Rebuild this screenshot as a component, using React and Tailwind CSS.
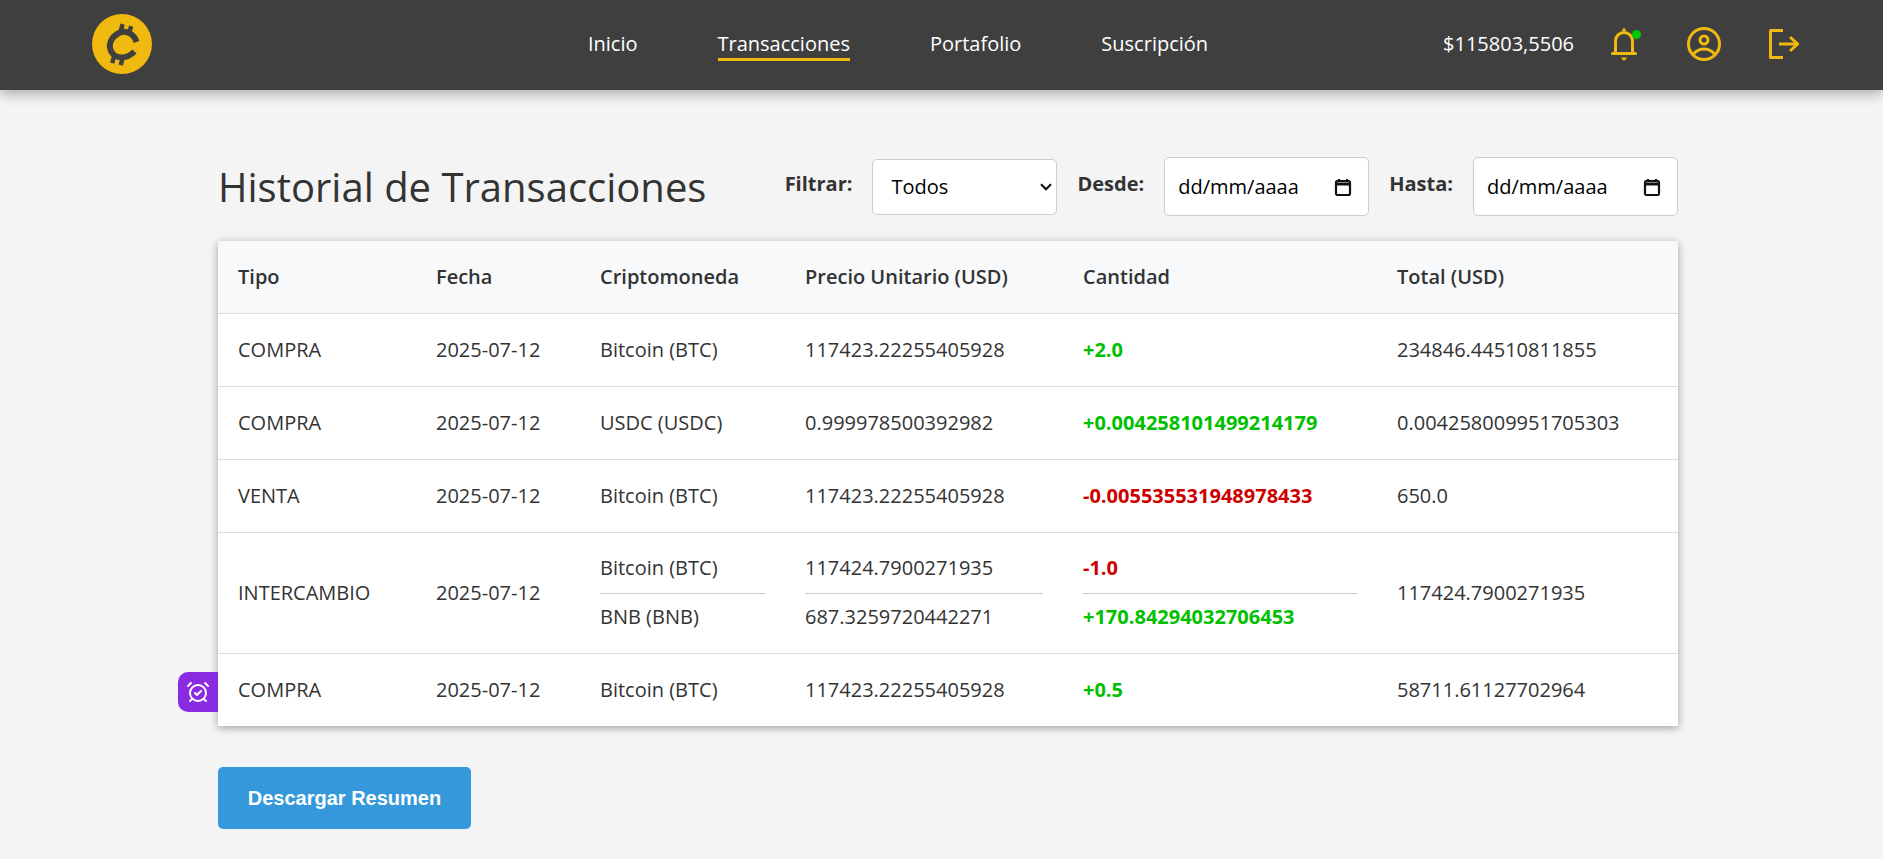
import { AlarmClockCheck } from 'lucide-react';

const rows = [
  { tipo: 'COMPRA', fecha: '2025-07-12', cripto: 'Bitcoin (BTC)', precio: '117423.22255405928', cantidad: '+2.0', total: '234846.44510811855' },
  { tipo: 'COMPRA', fecha: '2025-07-12', cripto: 'USDC (USDC)', precio: '0.999978500392982', cantidad: '+0.004258101499214179', total: '0.004258009951705303' },
  { tipo: 'VENTA', fecha: '2025-07-12', cripto: 'Bitcoin (BTC)', precio: '117423.22255405928', cantidad: '-0.005535531948978433', total: '650.0' },
  {
    tipo: 'INTERCAMBIO',
    fecha: '2025-07-12',
    cripto: ['Bitcoin (BTC)', 'BNB (BNB)'],
    precio: ['117424.7900271935', '687.3259720442271'],
    cantidad: ['-1.0', '+170.84294032706453'],
    total: '117424.7900271935',
  },
  { tipo: 'COMPRA', fecha: '2025-07-12', cripto: 'Bitcoin (BTC)', precio: '117423.22255405928', cantidad: '+0.5', total: '58711.61127702964' },
];

function Logo() {
  return (
    <svg width="60" height="60" viewBox="0 0 60 60">
      <circle cx="30" cy="30" r="30" fill="#f0b90f" />
      <g fill="#3f3f3f">
        <path d="M28.5 9.5l4.3 1.2-2 7-4.3-1.2z" />
        <path d="M37 11.5l4.3 1.2-2 7-4.3-1.2z" />
        <path d="M20 41.5l4.3 1.2-2 7-4.3-1.2z" />
        <path d="M28.5 43.5l4.3 1.2-2 7-4.3-1.2z" />
      </g>
      <path d="M44.5 28 C42 20 34 15.5 27 19 C19 23 15.5 31 19.5 38 C23.500 44.500 34 46 42.500 37.500" fill="none" stroke="#3f3f3f" strokeWidth="6" />
    </svg>
  );
}

function BellIcon() {
  return (
    <svg width="26" height="34" viewBox="0 0 26 34" fill="none" stroke="#f0b90f" strokeWidth="3" strokeLinejoin="round">
      <path d="M4.500 26V14c0-5 3.800-8.500 8.500-8.500s8.500 3.500 8.500 8.500v12" />
      <path d="M1.500 26.500h23" strokeLinecap="round" />
      <path d="M10.500 31h5L13 33.500z" fill="#f0b90f" strokeWidth="1" />
      <circle cx="13" cy="3" r="1.300" fill="#f0b90f" strokeWidth="1" />
    </svg>
  );
}

function UserIcon() {
  return (
    <svg width="34" height="34" viewBox="0 0 34 34" fill="none" stroke="#f0b90f" strokeWidth="3">
      <circle cx="17" cy="17" r="15.500" />
      <circle cx="17" cy="13" r="4" />
      <path d="M6.500 27c3-3.500 6.500-5 10.500-5s7.500 1.500 10.500 5" />
    </svg>
  );
}

function LogoutIcon() {
  return (
    <svg width="30" height="30" viewBox="0 0 30 30" fill="none" stroke="#f0b90f" strokeWidth="3">
      <path d="M14 1.500H1.500v27H14" strokeLinejoin="round" />
      <path d="M10 15h18" />
      <path d="M21 8l7.500 7-7.500 7" />
    </svg>
  );
}

function CalendarIcon() {
  return (
    <svg width="18" height="18" viewBox="0 0 18 18" fill="none" stroke="#111111" strokeWidth="2.200">
      <rect x="2" y="3" width="14" height="14" rx="1.500" />
      <path d="M2 6h14" strokeWidth="3" />
      <path d="M5 1v2M13 1v2" />
    </svg>
  );
}

function DateField({ className }) {
  return (
    <div className={`flex h-[59px] items-center justify-between rounded-[5px] border border-[#cccccc] bg-white pl-[13px] pr-[16px] text-[20px] text-black ${className}`}>
      <span>dd/mm/aaaa</span>
      <CalendarIcon />
    </div>
  );
}

function Stacked({ items, className }) {
  return (
    <div>
      <div className={`pb-[10px] ${className ? className(items[0]) : ''}`}>{items[0]}</div>
      <div className={`border-t border-[#cccccc] pt-[8px] ${className ? className(items[1]) : ''}`}>{items[1]}</div>
    </div>
  );
}

const qtyColor = (v) => (v.startsWith('-') ? 'font-bold text-[#cc0000]' : 'font-bold text-[#00c000]');

export default function App() {
  return (
    <div className="min-h-[859px] bg-[#f4f4f4] font-['Open_Sans',sans-serif] text-[#333333]">
      <header className="flex h-[90px] items-center justify-between bg-[#3f3f3f] pb-[2px] pl-[92px] pr-[84px] shadow-[0_4px_12px_rgba(0,0,0,0.3)]">
        <Logo />
        <nav className="ml-[201px] mt-[2px] flex items-baseline gap-[80px] text-[20px] text-white">
          <a>Inicio</a>
          <a className="border-b-[3px] border-[#f0b90f] leading-[28px]">Transacciones</a>
          <a>Portafolio</a>
          <a>Suscripción</a>
        </nav>
        <div className="flex items-center">
          <span className="text-[20px] text-white">$115803,5506</span>
          <div className="relative ml-[37px] flex">
            <BellIcon />
            <span className="absolute right-[-4px] top-[3px] h-[9px] w-[9px] rounded-full bg-[#00c800]" />
          </div>
          <div className="ml-[50px]"><UserIcon /></div>
          <div className="ml-[48px]"><LogoutIcon /></div>
        </div>
      </header>

      <main className="ml-[218px] w-[1460px] pt-[67px]">
        <div className="flex items-center justify-between">
          <h1 className="text-[40px] font-normal leading-[54px]">Historial de Transacciones</h1>
          <div className="flex items-center">
            <label className="mb-[5px] text-[20px] font-bold">Filtrar:</label>
            <div className="relative ml-[20px]">
              <select className="block h-[56px] w-[185px] appearance-none rounded-[5px] border border-[#cccccc] bg-white pl-[18px] text-[20px] text-black">
                <option>Todos</option>
              </select>
              <svg className="pointer-events-none absolute right-[5px] top-[24px]" width="12" height="8" viewBox="0 0 12 8" fill="none" stroke="#111111" strokeWidth="2.200">
                <path d="M1 1.200l5 5 5-5" />
              </svg>
            </div>
            <label className="mb-[5px] ml-[20px] text-[20px] font-bold">Desde:</label>
            <DateField className="ml-[20px] w-[205px]" />
            <label className="mb-[5px] ml-[20px] text-[20px] font-bold">Hasta:</label>
            <DateField className="ml-[20px] w-[205px]" />
          </div>
        </div>

        <div className="mt-[25px] bg-white shadow-[0_2px_8px_rgba(0,0,0,0.35)]">
          <table className="w-full table-fixed border-collapse text-left text-[20px]">
            <colgroup>
              <col className="w-[198px]" />
              <col className="w-[164px]" />
              <col className="w-[205px]" />
              <col className="w-[278px]" />
              <col className="w-[314px]" />
              <col className="w-[301px]" />
            </colgroup>
            <thead className="bg-[#f8f9fa]">
              <tr className="h-[72px] border-b border-[#dddddd]">
                {['Tipo', 'Fecha', 'Criptomoneda', 'Precio Unitario (USD)', 'Cantidad', 'Total (USD)'].map((h) => (
                  <th key={h} className="px-[20px] font-semibold">{h}</th>
                ))}
              </tr>
            </thead>
            <tbody>
              {rows.map((r, i) => (
                <tr key={i} className={`border-[#dddddd] ${i < rows.length - 1 ? 'border-b' : ''} ${Array.isArray(r.cripto) ? 'h-[121px]' : 'h-[73px]'}`}>
                  <td className="px-[20px]">{r.tipo}</td>
                  <td className="px-[20px]">{r.fecha}</td>
                  <td className="px-[20px]">{Array.isArray(r.cripto) ? <Stacked items={r.cripto} /> : r.cripto}</td>
                  <td className="px-[20px]">{Array.isArray(r.precio) ? <Stacked items={r.precio} /> : r.precio}</td>
                  <td className="px-[20px]">
                    {Array.isArray(r.cantidad) ? <Stacked items={r.cantidad} className={qtyColor} /> : <span className={qtyColor(r.cantidad)}>{r.cantidad}</span>}
                  </td>
                  <td className="px-[20px]">{r.total}</td>
                </tr>
              ))}
            </tbody>
          </table>
        </div>

        <button className="mt-[41px] h-[62px] w-[253px] rounded-[5px] bg-[#3498db] font-['Liberation_Sans',sans-serif] text-[20px] font-bold text-white">
          Descargar Resumen
        </button>
      </main>

      {/* pestaña de recordatorios */}
      <div className="absolute left-[178px] top-[672px] flex h-[40px] w-[40px] items-center justify-center rounded-l-[10px] bg-[#8a2be2] text-white">
        <AlarmClockCheck size={24} strokeWidth={2} />
      </div>
    </div>
  );
}
